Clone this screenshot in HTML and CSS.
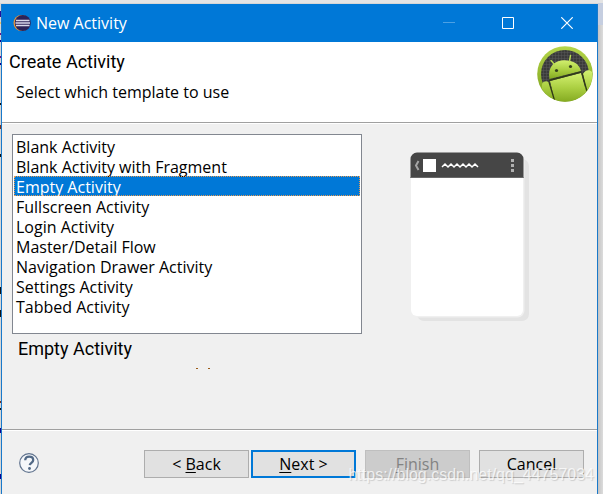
FILE: index.html
```html
<!DOCTYPE html>
<html lang="en">
<head>
<meta charset="utf-8">
<title>New Activity</title>
<link rel="stylesheet" href="styles.css">
</head>
<body>
<div class="desktop">
<main class="window">
  <header class="titlebar">
    <svg class="app-icon" viewBox="0 0 18 18" aria-hidden="true">
      <circle cx="8.500" cy="9" r="8" fill="#e9963a"/>
      <circle cx="9.800" cy="9" r="8" fill="#2c2359"/>
      <path d="M3 6.500h13.500M2.500 9h14.500M3 11.500h13.500" stroke="#d9d8eb" stroke-width="1.500"/>
    </svg>
    <span class="title">New Activity</span>
    <div class="window-controls">
      <button class="control" aria-label="Minimize" disabled><svg viewBox="0 0 12 12"><path d="M0 5.500h12" stroke="#4da1e4"/></svg></button>
      <button class="control" aria-label="Maximize"><svg viewBox="0 0 12 12"><path d="M.5.5h11v11H.5z" stroke="#fff"/></svg></button>
      <button class="control" aria-label="Close"><svg viewBox="0 0 12 12"><path d="M.3.3l11.400 11.400M11.700.3L.3 11.700" stroke="#fff" stroke-width="1.200"/></svg></button>
    </div>
  </header>

  <section class="banner">
    <div class="banner-text">
      <h1 class="heading">Create Activity</h1>
      <p class="hint">Select which template to use</p>
    </div>
    <svg class="android" viewBox="0 0 56 56" aria-hidden="true">
      <defs>
        <linearGradient id="rim" x1="0" y1="0" x2="0" y2="1"><stop offset="0" stop-color="#b5d64a"/><stop offset="1" stop-color="#789d17"/></linearGradient>
        <linearGradient id="robot" x1="0" y1="0" x2="0" y2="1"><stop offset="0" stop-color="#d2f070"/><stop offset=".5" stop-color="#acd043"/><stop offset="1" stop-color="#84aa20"/></linearGradient>
        <pattern id="mesh" width="3" height="3" patternUnits="userSpaceOnUse"><path d="M0 0h3v3H0z" fill="#3a3a3a"/><path d="M0 0h3M0 0v3" stroke="#585858"/></pattern>
        <clipPath id="disc"><circle cx="28" cy="28" r="27.500"/></clipPath>
      </defs>
      <circle cx="28" cy="28" r="27.800" fill="url(#rim)"/>
      <circle cx="28" cy="28" r="24" fill="url(#mesh)"/>
      <g clip-path="url(#disc)">
        <path d="M12.500 33C10.500 22 16 16 24 14.500S42 16 44 25z" fill="url(#robot)"/>
        <path d="M13 35l31-8 8 29H18z" fill="url(#robot)"/>
        <path d="M5 38c2-4 7-3 8 0l5 18H4zM46 28c2-4 6-5 9-2v24l-5-4z" fill="url(#robot)"/>
        <path d="M12 34.500L44 26M12 36l6 20M45 27l6 22" stroke="#303b16" stroke-width="1.300" fill="none"/>
      </g>
      <path d="M17.500 18.500L14 14.500M32.500 15l1-5.500" stroke="#b9dc50" stroke-width="1.400" stroke-linecap="round"/>
      <circle cx="19.500" cy="24.500" r="1.600" fill="#34401c"/><circle cx="33.500" cy="20.500" r="1.600" fill="#34401c"/>
    </svg>
  </section>

  <section class="content">
    <div class="chooser">
      <select class="templates" size="9" aria-label="Template">
        <option>Blank Activity</option>
        <option>Blank Activity with Fragment</option>
        <option selected>Empty Activity</option>
        <option>Fullscreen Activity</option>
        <option>Login Activity</option>
        <option>Master/Detail Flow</option>
        <option>Navigation Drawer Activity</option>
        <option>Settings Activity</option>
        <option>Tabbed Activity</option>
      </select>
      <h2 class="selected-name">Empty Activity</h2>
      <div class="marks"></div>
    </div>
    <div class="preview">
      <svg class="phone" viewBox="0 0 120 170" role="img" aria-label="Empty Activity preview">
        <rect x="7" y="7" width="112" height="162" rx="7" fill="#e3e3e3"/>
        <rect x="1" y="2" width="113.500" height="163.500" rx="7" fill="#f0f0f0"/>
        <rect x="1" y="1" width="112" height="163" rx="6" fill="#fff"/>
        <path d="M0.500 26V7a6.500 6.500 0 0 1 6.500-6.500h100a6.500 6.500 0 0 1 6.500 6.500v19z" fill="#464646"/>
        <path d="M.5 25.500h113" stroke="#686868"/>
        <path d="M8.500 9L6 13.500 8.500 18" stroke="#a5a5a5" stroke-width="2" fill="none"/>
        <path d="M13 7h13v13H13z" fill="#fff"/>
        <path d="M32 15l3-3 3 3 3-3 3 3 3-3 3 3 3-3 3 3 3-3 3 3 3-3 3 3" stroke="#fff" stroke-width="1.500" fill="none"/>
        <path d="M101 7h3v3h-3zM101 12h3v3h-3zM101 17h3v3h-3z" fill="#b0b0b0"/>
      </svg>
    </div>
  </section>

  <footer class="footer">
    <button class="help" aria-label="Help"><svg viewBox="0 0 20 20"><circle cx="10" cy="10" r="9.300" fill="#f5f7fa" stroke="#60738e" stroke-width="1.200"/><path d="M6.200 7.300C6.300 4.700 8 3.700 10.200 3.700c2.300 0 4 1.300 4 3.300 0 2.800-3.200 2.800-3.400 5.200" fill="none" stroke="#526986" stroke-width="2.300"/><circle cx="10.500" cy="15.500" r="1.400" fill="#526986"/></svg></button>
    <div class="actions">
      <div class="steps">
        <button class="button">&lt; <u>B</u>ack</button>
        <button class="button primary"><u>N</u>ext &gt;</button>
      </div>
      <button class="button" disabled><u>F</u>inish</button>
      <button class="button">Cancel</button>
    </div>
  </footer>
</main>
<div class="watermark">https://blog.csdn.net/qq_44757034</div>
</div>
</body>
</html>
```
FILE: styles.css
```css
* { box-sizing: border-box; }
body { margin: 0; background: #d6d6d6; color: #000; font: 16px/20px "Open Sans", "Noto Sans CJK SC", sans-serif; }
h1, h2, p { margin: 0; font-weight: 400; }
button { font: inherit; padding: 0; margin: 0; }
.desktop {
  position: relative; display: flex; min-height: 100vh; padding: 4px 5px 0 1px;
  background:
    linear-gradient(#21109c, #21109c) 0 11px / 1px 6px no-repeat,
    linear-gradient(#eac26a, #eac26a) 0 22px / 1px 2px no-repeat,
    linear-gradient(#71108b, #71108b) 0 33px / 1px 2px no-repeat,
    linear-gradient(#0c0090, #0c0090) 0 40px / 1px 2px no-repeat,
    linear-gradient(#71108b, #71108b) 0 56px / 1px 2px no-repeat,
    linear-gradient(#0c0090, #0c0090) 0 63px / 1px 2px no-repeat,
    linear-gradient(#111, #111) 0 103px / 1px 2px no-repeat,
    linear-gradient(#783020, #783020) 0 125px / 1px 4px no-repeat,
    linear-gradient(#111, #111) 0 154px / 1px 3px no-repeat,
    linear-gradient(#111, #111) 0 287px / 1px 7px no-repeat,
    linear-gradient(#111, #111) 0 310px / 1px 7px no-repeat,
    linear-gradient(#783020, #783020) 0 401px / 1px 2px no-repeat,
    linear-gradient(#111, #111) 0 408px / 1px 2px no-repeat,
    linear-gradient(#0c0090, #0c0090) 0 428px / 1px 5px no-repeat,
    linear-gradient(#0c0090, #0c0090) 0 474px / 1px 5px no-repeat,
    linear-gradient(#e4e4e4, #e4e4e4) 0 0 / 100% 3px no-repeat,
    linear-gradient(#c5cee0, #c5cee0) 100% 3px / 5px 22px no-repeat,
    linear-gradient(90deg, #c4c4c4, #dcdcdc) 100% 0 / 5px 100% no-repeat,
    #d6d6d6;
}
.window { flex: 1; display: flex; flex-direction: column; background: #f0f0f0; border: solid #1979ca; border-width: 0 1px; }
.titlebar { display: flex; align-items: center; height: 38px; padding: 0 1px 0 11px; background: #0078d7; color: #fff; }
.app-icon { width: 18px; height: 18px; margin-right: 5px; }
.window-controls { display: flex; margin-left: auto; }
.control { display: grid; place-items: center; width: 59px; height: 38px; border: 0; background: none; }
.control svg { width: 12px; height: 12px; fill: none; }
.banner { display: flex; justify-content: space-between; height: 81px; padding: 4px 4px 0 7px; background: #fff; border-bottom: 1px solid #a0a0a0; }
.heading, .selected-name { font: 18px/20px Roboto, "Liberation Sans", sans-serif; }
.heading { margin-top: 6px; }
.hint { margin: 10px 0 0 7px; }
.android { width: 56px; height: 56px; }
.content { flex: 1; display: grid; grid-template-columns: 14fr 9fr; padding: 10px 10px 0; border-top: 1px solid #fff; border-bottom: 1px solid #a0a0a0; }
.templates { display: block; width: 100%; height: 200px; padding: 1px; border: 1px solid #828790; border-radius: 0; background: #fff; color: #000; font: inherit; overflow: hidden; outline: 0; }
.templates option { height: 20px; min-height: 20px; padding: 0 2px; line-height: 18px; }
.templates option:checked { background: #0078d7 linear-gradient(#0078d7, #0078d7); color: #fff; -webkit-text-fill-color: #fff; outline: 1px dotted #e49a52; outline-offset: -1px; }
.selected-name { margin: 5px 0 0 6px; }
.marks { width: 14px; height: 1px; margin: 9px 0 0 184px; background: linear-gradient(90deg, #9b5b17 2px, transparent 2px 12px, #9b5b17 12px); }
.preview { padding: 18px 0 0 48px; }
.phone { display: block; width: 120px; height: 170px; }
.footer { display: flex; justify-content: space-between; align-items: flex-start; height: 64px; padding: 19px 13px 0 17px; border-top: 1px solid #fff; }
.help { width: 20px; height: 20px; margin-top: 3px; border: 0; background: none; }
.help svg { display: block; }
.actions { display: flex; gap: 9px; }
.steps { display: flex; gap: 2px; }
.button { width: 105px; height: 28px; border: 1px solid #adadad; background: #e1e1e1; color: #000; line-height: 20px; }
.button u { text-underline-offset: 2px; }
.primary { border: 2px solid #0078d7; }
.button:disabled { border-color: #bfbfbf; background: #ccc; color: #838383; }
.watermark { position: absolute; right: 9px; bottom: 9px; color: rgba(255, 255, 255, .75); font: 16px/20px "Liberation Sans", sans-serif; text-shadow: 1px 1px 1px rgba(0, 0, 0, .15); pointer-events: none; }
```
